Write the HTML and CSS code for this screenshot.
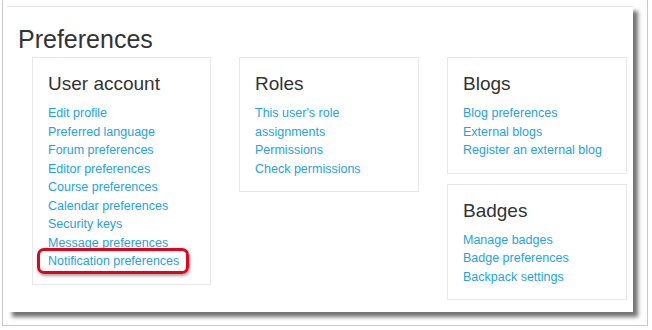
FILE: index.html
```html
<!DOCTYPE html>
<html>
<head>
    <title>Preferences</title>
    <link rel="stylesheet" href="styles.css">
</head>
<body>
    <div class="frame">
        <div class="panel">
            <h1>Preferences</h1>
            <div class="cards">
                <div class="card">
                    <h3>User account</h3>
                    <ul>
                        <li><a href="#">Edit profile</a></li>
                        <li><a href="#">Preferred language</a></li>
                        <li><a href="#">Forum preferences</a></li>
                        <li><a href="#">Editor preferences</a></li>
                        <li><a href="#">Course preferences</a></li>
                        <li><a href="#">Calendar preferences</a></li>
                        <li><a href="#">Security keys</a></li>
                        <li><a href="#">Message preferences</a></li>
                        <!-- highlighted for the help page -->
                        <li><a href="#" class="marked">Notification preferences</a></li>
                    </ul>
                </div>
                <div class="card">
                    <h3>Roles</h3>
                    <ul>
                        <li><a href="#">This user's role assignments</a></li>
                        <li><a href="#">Permissions</a></li>
                        <li><a href="#">Check permissions</a></li>
                    </ul>
                </div>
                <div class="stack">
                    <div class="card">
                        <h3>Blogs</h3>
                        <ul>
                            <li><a href="#">Blog preferences</a></li>
                            <li><a href="#">External blogs</a></li>
                            <li><a href="#">Register an external blog</a></li>
                        </ul>
                    </div>
                    <div class="card">
                        <h3>Badges</h3>
                        <ul>
                            <li><a href="#">Manage badges</a></li>
                            <li><a href="#">Badge preferences</a></li>
                            <li><a href="#">Backpack settings</a></li>
                        </ul>
                    </div>
                </div>
            </div>
        </div>
    </div>
</body>
</html>
```

FILE: styles.css
```css
body {
    margin: 0;
    background-color: #fff;
    font-family: 'Liberation Sans', Arial, sans-serif;
}

/* Outer screenshot frame */
.frame {
    margin-left: 2px;
    width: 646px;
    height: 326px;
    border: 1px solid #c9c9c9;
    border-top: none;
    padding: 6px 0 0 4px;
    box-sizing: border-box;
}

/* White page panel with drop shadow */
.panel {
    width: 626px;
    height: 306px;
    background-color: #fff;
    border-top: 1px solid #e6e6e6;
    box-shadow: 5px 5px 4px rgba(0, 0, 0, 0.55);
    padding: 0 11px;
    box-sizing: border-box;
}

h1 {
    margin: 0;
    padding-top: 17px;
    font-size: 25px;
    font-weight: normal;
    line-height: 30px;
    color: #333;
}

.cards {
    display: grid;
    grid-template-columns: 179px 180px 180px;
    column-gap: 28px;
    align-items: start;
    margin: 3px 0 0 14px;
}

.stack {
    display: flex;
    flex-direction: column;
    gap: 10px;
}

.card {
    border: 1px solid #e8e8e8;
    padding: 14px 15px 13px;
}

.card h3 {
    margin: 0 0 8px;
    font-size: 19px;
    font-weight: normal;
    line-height: 24px;
    color: #333;
}

.card ul {
    list-style: none;
    margin: 0;
    padding: 0;
}

.card li {
    font-size: 12.5px;
    line-height: 18.5px;
}

.card a {
    color: #25a3dc;
    text-decoration: none;
}

/* Red callout round the link */
.marked {
    position: relative;
}

.marked::after {
    content: '';
    position: absolute;
    top: -6px;
    bottom: -6px;
    left: -11px;
    right: -10px;
    border: 3px solid #e5001c;
    border-radius: 7px;
    box-shadow: 1px 2px 3px rgba(0, 0, 0, 0.35);
}
```
